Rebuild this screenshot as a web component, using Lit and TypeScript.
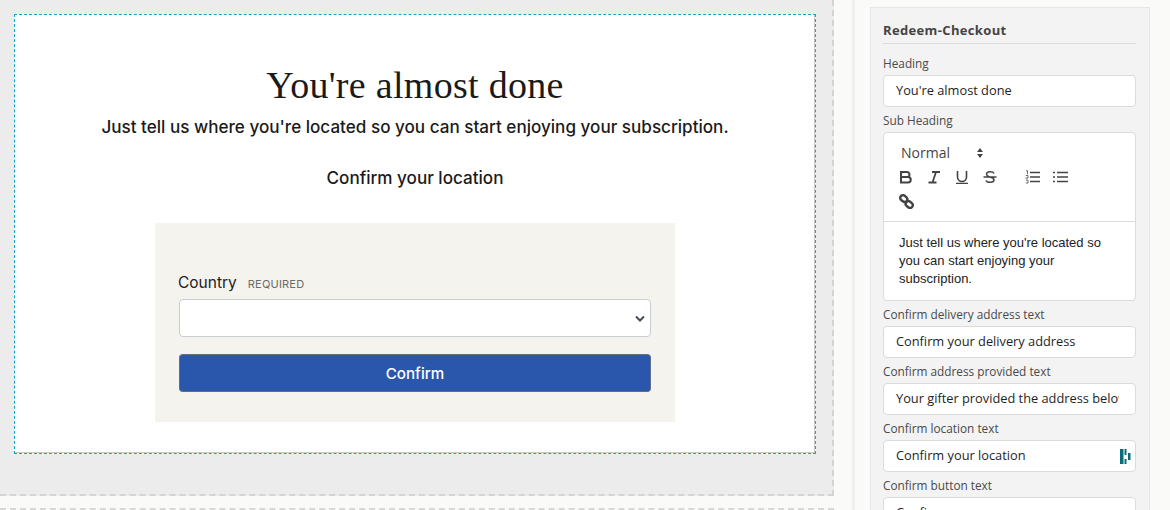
import { LitElement, html, css } from "lit";
import { customElement } from "lit/decorators.js";

@customElement("app-root")
export class AppRoot extends LitElement {
  static styles = css`
    :host { display: block; width: 1170px; height: 510px; overflow: hidden; background: #fafaf9; font-family: "Inter", "Liberation Sans", sans-serif; }
    * { box-sizing: border-box; }
    .page { display: flex; height: 510px; align-items: flex-start; }
    .left { width: 834px; flex: none; height: 510px; border-bottom: 2px dashed #d8d8d8; }
    .canvas { height: 496px; background: #ececec; border-right: 2px dashed #d4d4d4; border-bottom: 2px dashed #d4d4d4; padding: 14px 16px 0 14px; }
    .card { height: 440px; background: #fff; border: 1px dashed #14a5c8; box-shadow: inset -1px -1px 0 #c9c9c9; display: flex; flex-direction: column; align-items: center; padding-top: 48px; color: #1a1a1a; }
    h1 { margin: 0; font: 400 38px/44px "Liberation Serif", "Times New Roman", serif; color: #1a1a1a; letter-spacing: .3px; }
    .sub { font-size: 17.1px; line-height: 26px; margin-top: 7px; font-weight: 480; white-space: nowrap; }
    .conf { font-size: 17.1px; line-height: 26px; margin-top: 25px; font-weight: 500; }
    .box { width: 520px; height: 199px; margin-top: 32px; background: #f4f3ee; padding: 48px 24px 0; }
    .lbl { display: flex; align-items: baseline; gap: 11px; font-size: 15.5px; line-height: 24px; color: #222; margin-left: -1px; }
    .lbl span { font-size: 11px; color: #6b6b6b; letter-spacing: .2px; }
    .sel { height: 38px; margin-top: 3px; background: #fff; border: 1px solid #c9ced3; border-radius: 4px; display: flex; align-items: center; justify-content: flex-end; padding-right: 3px; }
    .btn { height: 38px; margin-top: 17px; background: #2a56ab; border: 1px solid #5d6d8c; border-top-color: #6b6f78; border-radius: 4px; color: #fff; display: flex; align-items: center; justify-content: center; font-size: 15.2px; font-weight: 500; }

    .side { flex: 1; height: 510px; padding-left: 18px; display: flex; }
    .sidewrap { border-left: 3px solid #efefef; padding-left: 15px; height: 510px; }
    .panel { width: 280px; height: 520px; margin-top: 7px; background: #f3f3f3; border: 1px solid #e6e6e6; border-bottom: 0; padding: 12px 13px 0 12px; font-family: "Open Sans", "Noto Sans", sans-serif; color: #3e3e3c; }
    .title { font-size: 13px; font-weight: 700; line-height: 20px; letter-spacing: .35px; color: #444; padding-bottom: 3px; border-bottom: 1px solid #dddbda; }
    .f { font-size: 11.8px; line-height: 14px; color: #4a4a4a; margin-top: 6px; height: 16px; }
    .title + .f { margin-top: 12px; }
    .in { height: 32px; margin-top: 3px; background: #fff; border: 1px solid #dddbda; border-radius: 4px; padding: 0 12px 2px; font-size: 12.8px; line-height: 28px; color: #1e1e1e; display: flex; justify-content: space-between; align-items: center; overflow: hidden; white-space: nowrap; }
    .in.icon { padding-right: 4px; padding-bottom: 0; }
    .in.icon span { margin-bottom: 2px; }
    .clip { width: 223px; overflow: hidden; }
    .rte { height: 169px; margin-top: 3px; background: #fff; border: 1px solid #dddbda; border-radius: 4px; }
    .tools { height: 89px; border-bottom: 1px solid #dddbda; padding: 8px 0 0 15px; color: #444; }
    .row { display: flex; align-items: center; height: 24px; }
    .normal { font-size: 14px; width: 75px; color: #444; margin: 0 0 2px 2px; }
    .ic { width: 28px; height: 24px; display: flex; align-items: center; }
    .ic svg, .row svg { display: block; }
    .gap { width: 14px; }
    .txt { padding: 12px 30px 0 15px; font: 13px/18px "Liberation Sans", Arial, sans-serif; color: #222; }
  `;

  render() {
    const stroke = "#444";
    return html`<div class="page">
      <div class="left"><div class="canvas"><div class="card">
        <h1>You're almost done</h1>
        <div class="sub">Just tell us where you're located so you can start enjoying your subscription.</div>
        <div class="conf">Confirm your location</div>
        <div class="box">
          <div class="lbl">Country <span>REQUIRED</span></div>
          <div class="sel"><svg width="14" height="14" viewBox="0 0 14 14"><path d="M3 5.500 7 9.500 11 5.500" fill="none" stroke="#444c55" stroke-width="2"/></svg></div>
          <div class="btn">Confirm</div>
        </div>
      </div></div></div>
      <div class="side"><div class="sidewrap"><div class="panel">
        <div class="title">Redeem-Checkout</div>
        <div class="f">Heading</div>
        <div class="in">You're almost done</div>
        <div class="f">Sub Heading</div>
        <div class="rte">
          <div class="tools">
            <div class="row"><span class="normal">Normal</span>
              <svg width="8" height="12" viewBox="0 0 8 12"><path d="M4 1 7 5H1ZM4 11 1 7H7Z" fill="#444"/></svg></div>
            <div class="row">
              <span class="ic"><svg width="14" height="14" viewBox="0 0 14 14"><path d="M2 2H8A2.500 2.500 0 0 1 8 7H2ZM2 7H9A2.700 2.700 0 0 1 9 12.500H2Z" fill="none" stroke="${stroke}" stroke-width="2"/></svg></span>
              <span class="ic"><svg width="14" height="14" viewBox="0 0 14 14"><path d="M5 2H13M1.500 12.500H9.500M9 2 5.500 12.500" fill="none" stroke="${stroke}" stroke-width="1.800"/></svg></span>
              <span class="ic"><svg width="14" height="14" viewBox="0 0 14 14"><path d="M2.500 1V7A4.500 4.500 0 0 0 11.500 7V1M1 13.500H13" fill="none" stroke="${stroke}" stroke-width="1.600"/></svg></span>
              <span class="ic"><svg width="14" height="14" viewBox="0 0 14 14"><path d="M11 3.500C10 1 3.500 1 3.500 4.200 3.500 6 6 6.500 7 7 9 7.500 11 8 11 10 11 13 4 13 3 10.500M0.500 7H13.500" fill="none" stroke="${stroke}" stroke-width="1.500"/></svg></span>
              <span class="gap"></span>
              <span class="ic"><svg width="15" height="14" viewBox="0 0 15 14"><path d="M5 2.500H15M5 7H15M5 11.500H15" stroke="${stroke}" stroke-width="1.700"/><path d="M1 .8H2.500V4.200M.8 5.500H3V8H.8V8.500M.8 10H3V13H.8" fill="none" stroke="${stroke}" stroke-width=".8"/></svg></span>
              <span class="ic"><svg width="15" height="14" viewBox="0 0 15 14"><path d="M4 2.500H15M4 7H15M4 11.500H15" stroke="${stroke}" stroke-width="1.700"/><path d="M0 2.500H2M0 7H2M0 11.500H2" stroke="${stroke}" stroke-width="1.700"/></svg></span>
            </div>
            <div class="row"><svg width="15" height="15" viewBox="0 0 15 15"><g fill="none" stroke="${stroke}" stroke-width="2.400"><rect x="1" y="1.800" width="7.500" height="5.500" rx="2.750" transform="rotate(40 4.750 4.500)"/><rect x="6.500" y="7.800" width="7.500" height="5.500" rx="2.750" transform="rotate(40 10.250 10.500)"/></g></svg></div>
          </div>
          <div class="txt">Just tell us where you're located so you can start enjoying your subscription.</div>
        </div>
        <div class="f">Confirm delivery address text</div>
        <div class="in">Confirm your delivery address</div>
        <div class="f">Confirm address provided text</div>
        <div class="in"><div class="clip">Your gifter provided the address below</div></div>
        <div class="f">Confirm location text</div>
        <div class="in icon"><span>Confirm your location</span>
          <svg width="11" height="15" viewBox="0 0 11 15"><path d="M0 0H3.500V15H0ZM4.500 0H6.500V6H4.500ZM4.500 10H6.500V15H4.500ZM8 4H10.500V11H8Z" fill="#0b6a78"/></svg></div>
        <div class="f">Confirm button text</div>
        <div class="in">Confirm</div>
      </div></div></div>
    </div>`;
  }
}
